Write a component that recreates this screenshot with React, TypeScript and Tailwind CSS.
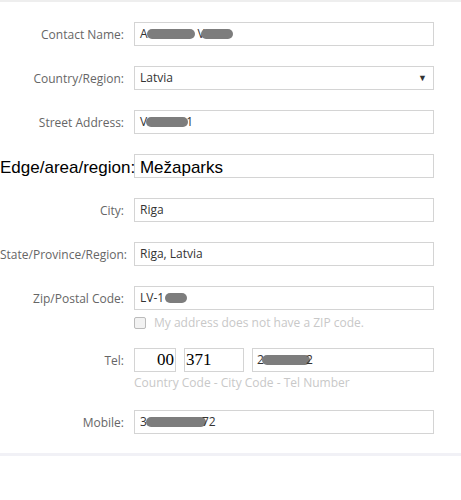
import React from 'react';

const font = { fontFamily: '"Open Sans", "Liberation Sans", sans-serif' };

function Blob({ w, className = '' }: { w: string; className?: string }) {
  return <span className={`inline-block h-[10px] rounded-full bg-[#7d7d7d] align-middle ${w} ${className}`} />;
}

function Row({ label, children, extra }: { label: string; children: React.ReactNode; extra?: React.ReactNode }) {
  return (
    <div className="flex items-start h-[44px]">
      <div className="w-[125px] shrink-0 text-right pr-[1px] pt-[4px] text-[12px] text-[#666] whitespace-nowrap">{label}</div>
      <div className="ml-[9px] w-[300px]">
        {children}
        {extra}
      </div>
    </div>
  );
}

function Box({ children, className = '' }: { children?: React.ReactNode; className?: string }) {
  return (
    <div className={`h-[24px] border border-[#d4d4d4] bg-white flex items-center px-[5px] text-[12px] text-[#333] ${className}`}>
      {children}
    </div>
  );
}

export default function App() {
  return (
    <div className="w-[461px] h-[500px] bg-white overflow-hidden" style={font}>
      <div className="h-[2px] bg-[#eeeeee]" />
      <div className="pt-[20px] flex flex-col">
        <Row label="Contact Name:">
          <Box>
            <span>A</span>
            <Blob w="w-[48px]" className="-ml-[1px]" />
            <span className="ml-[3px]">V</span>
            <Blob w="w-[32px]" className="-ml-[4px]" />
          </Box>
        </Row>
        <Row label="Country/Region:">
          <Box className="justify-between">
            <span>Latvia</span>
            <span className="text-[9px] text-[#333] pr-[1px]">▼</span>
          </Box>
        </Row>
        <Row label="Street Address:">
          <Box>
            <span>V</span>
            <Blob w="w-[42px]" className="-ml-[1px]" />
            <span className="-ml-[2px]">1</span>
          </Box>
        </Row>
        <div className="relative h-[44px]">
          <div className="ml-[134px] w-[300px]">
            <Box />
          </div>
          <div
            className="absolute left-0 top-[1px] text-[17px] text-black whitespace-nowrap"
            style={{ fontFamily: '"Liberation Sans", Arial, sans-serif' }}
          >
            Edge/area/region: Mežaparks
          </div>
        </div>
        <Row label="City:">
          <Box>Riga</Box>
        </Row>
        <Row label="State/Province/Region:">
          <Box>Riga, Latvia</Box>
        </Row>
        <Row
          label="Zip/Postal Code:"
          extra={
            <div className="flex items-center mt-[4px] text-[12px] text-[#c8c8c8]">
              <span className="w-[12px] h-[12px] border border-[#bbb] rounded-[2px] bg-[#f2f2f2] mr-[8px]" />
              My address does not have a ZIP code.
            </div>
          }
        >
          <Box>
            <span>LV-1</span>
            <Blob w="w-[22px]" className="ml-[1px] h-[8px]" />
          </Box>
        </Row>
        <div className="h-[18px]" />
        <Row
          label="Tel:"
          extra={<div className="mt-[2px] text-[12px] text-[#c8c8c8] whitespace-nowrap">Country Code - City Code - Tel Number</div>}
        >
          <div className="flex">
            <div
              className="w-[42px] h-[24px] border border-[#d4d4d4] flex items-center justify-end pr-[1px] text-[17px] text-black"
              style={{ fontFamily: '"Liberation Serif", "Times New Roman", serif' }}
            >
              00
            </div>
            <div
              className="ml-[8px] w-[60px] h-[24px] border border-[#d4d4d4] flex items-center pl-[1px] text-[17px] text-black"
              style={{ fontFamily: '"Liberation Serif", "Times New Roman", serif' }}
            >
              371
            </div>
            <div className="ml-[8px] flex-1 h-[24px] border border-[#d4d4d4] flex items-center px-[4px] text-[12px] text-[#333]">
              <span>2</span>
              <Blob w="w-[48px]" className="-ml-[2px]" />
              <span className="-ml-[4px]">2</span>
            </div>
          </div>
        </Row>
        <div className="h-[18px]" />
        <Row label="Mobile:">
          <Box>
            <span>3</span>
            <Blob w="w-[60px]" className="-ml-[1px]" />
            <span className="-ml-[4px]">72</span>
          </Box>
        </Row>
      </div>
      <div className="mt-[-1px] h-[3px] bg-[#f1f1f6]" />
    </div>
  );
}
